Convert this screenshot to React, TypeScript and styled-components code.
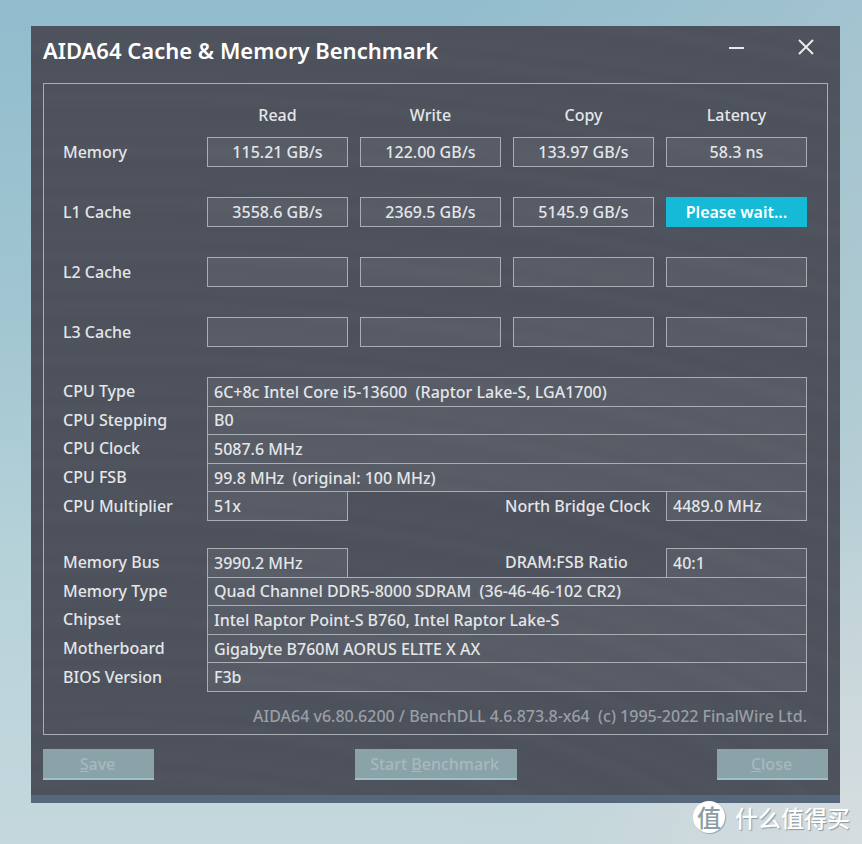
import React from "react";
import styled, { createGlobalStyle, css } from "styled-components";

const line = "#a9adb4";
const columns = "132px repeat(4, minmax(0, 1fr))";

const GlobalStyle = createGlobalStyle`
  * { box-sizing: border-box; }
  body {
    margin: 0;
    font-family: "Noto Sans", "Open Sans", "Noto Sans CJK SC", sans-serif;
    font-size: 16px;
    font-weight: 500;
    line-height: 22px;
    color: #e4e6e8;
  }
`;

const Desktop = styled.main`
  position: relative;
  min-height: 100vh;
  padding: 26px 22px 41px 31px;
  background:
    radial-gradient(circle at 100% 100%, #d6dde0 0, rgba(214, 221, 224, 0) 28%),
    linear-gradient(90deg, rgba(255, 255, 255, 0) 50%, rgba(190, 205, 210, 0.4) 100%),
    linear-gradient(180deg, #90bccd 0%, #a2c6d1 38%, #b6d2d9 66%, #c4d8dd 100%);
`;

const Window = styled.section`
  border-bottom: 8px solid #57677b;
  padding: 0 12px 15px;
  background:
    repeating-radial-gradient(
      ellipse 1300px 700px at 10% 140%,
      rgba(255, 255, 255, 0) 0,
      rgba(255, 255, 255, 0.018) 26px,
      rgba(255, 255, 255, 0) 40px,
      rgba(255, 255, 255, 0.012) 58px,
      rgba(255, 255, 255, 0) 97px
    ),
    #4c515c;
`;

const TitleBar = styled.header`
  display: flex;
  justify-content: space-between;
  align-items: flex-start;
  height: 57px;
`;

const Title = styled.h1`
  margin: 0;
  font-size: 22px;
  line-height: 48px;
  font-weight: 600;
  white-space: nowrap;
  color: #fff;
`;

const WindowControls = styled.div`
  display: flex;
  gap: 36px;
  padding: 4px 6px 0 0;
`;

const ControlButton = styled.button`
  display: grid;
  place-items: center;
  width: 33px;
  height: 33px;
  padding: 0;
  border: 0;
  background: none;
  color: #e8eaec;
`;

const Panel = styled.div`
  border: 1px solid ${line};
  padding: 20px 20px 7px 19px;
`;

const Results = styled.table`
  display: block;
  margin-bottom: 30px;
`;

const ResultsHead = styled.thead`
  display: block;
  margin-bottom: 11px;
`;

const ResultsBody = styled.tbody`
  display: grid;
  gap: 30px;
`;

const ResultRow = styled.tr`
  display: grid;
  grid-template-columns: ${columns};
  column-gap: 12px;
`;

const Heading = styled.th`
  padding: 0;
  font-weight: 500;
  text-align: center;
`;

const RowHeading = styled.th`
  padding: 0;
  font-weight: 500;
  line-height: 30px;
  text-align: left;
`;

const Cell = styled.td<{ $busy?: boolean }>`
  height: 30px;
  padding: 0;
  border: 1px solid ${line};
  background: rgba(255, 255, 255, 0.06);
  line-height: 28px;
  text-align: center;
  white-space: nowrap;
  ${(p) =>
    p.$busy &&
    css`
      border-color: #14bad6;
      background: #14bad6;
      color: #fff;
      font-weight: 600;
    `}
`;

const Details = styled.div`
  display: grid;
  grid-auto-rows: 1fr;
  height: 143px;
  margin-bottom: 28px;

  &:last-of-type {
    margin-bottom: 14px;
  }
`;

const DetailRow = styled.div`
  display: grid;
  grid-template-columns: ${columns};
  column-gap: 12px;
  min-height: 0;
  align-items: stretch;
`;

const Label = styled.label`
  align-self: center;
  white-space: nowrap;
`;

const SideLabel = styled(Label)`
  grid-column: 3 / 5;
  justify-self: end;
  width: 149px;
`;

const Field = styled.input<{ $short?: boolean }>`
  grid-column: ${(p) => (p.$short ? "auto" : "2 / -1")};
  width: 100%;
  min-width: 0;
  margin: 0 0 -1px;
  padding: 0 6px;
  border: 1px solid ${line};
  border-radius: 0;
  outline: 0;
  background: rgba(255, 255, 255, 0.06);
  color: inherit;
  font: inherit;
`;

const Version = styled.p`
  margin: 0;
  text-align: right;
  white-space: pre;
  color: #9a9ea5;
`;

const Actions = styled.footer`
  display: flex;
  justify-content: space-between;
  margin-top: 14px;
`;

const ActionButton = styled.button<{ $wide?: boolean }>`
  width: ${(p) => (p.$wide ? 162 : 111)}px;
  height: 31px;
  padding: 0 2px 0 0;
  border: 0;
  border-bottom: 2px solid #a0c0c7;
  background: #8aa3a9;
  color: #a9b8bd;
  font: inherit;
`;

const Watermark = styled.div`
  position: absolute;
  right: 12px;
  bottom: 11px;
  display: flex;
  align-items: center;
  gap: 10px;
  color: #fff;
  font-family: "Noto Sans CJK SC", sans-serif;
  font-size: 23px;
  font-weight: 500;
  line-height: 32px;
  text-shadow: 1px 1px 1px #8b9ba1;
`;

const Badge = styled.span`
  display: grid;
  place-items: center;
  width: 32px;
  height: 32px;
  border-radius: 50%;
  background: #fff;
  box-shadow: 1px 1px 1px #9aaab0;
  color: #8d9da3;
  font-size: 24px;
  font-style: oblique 8deg;
  line-height: 30px;
  text-shadow: none;
`;

const results: [string, string[]][] = [
  ["Memory", ["115.21 GB/s", "122.00 GB/s", "133.97 GB/s", "58.3 ns"]],
  ["L1 Cache", ["3558.6 GB/s", "2369.5 GB/s", "5145.9 GB/s", "Please wait..."]],
  ["L2 Cache", ["", "", "", ""]],
  ["L3 Cache", ["", "", "", ""]],
];

type Detail = { label: string; value: string; side?: [string, string] };

const cpu: Detail[] = [
  { label: "CPU Type", value: "6C+8c Intel Core i5-13600  (Raptor Lake-S, LGA1700)" },
  { label: "CPU Stepping", value: "B0" },
  { label: "CPU Clock", value: "5087.6 MHz" },
  { label: "CPU FSB", value: "99.8 MHz  (original: 100 MHz)" },
  { label: "CPU Multiplier", value: "51x", side: ["North Bridge Clock", "4489.0 MHz"] },
];

const board: Detail[] = [
  { label: "Memory Bus", value: "3990.2 MHz", side: ["DRAM:FSB Ratio", "40:1"] },
  { label: "Memory Type", value: "Quad Channel DDR5-8000 SDRAM  (36-46-46-102 CR2)" },
  { label: "Chipset", value: "Intel Raptor Point-S B760, Intel Raptor Lake-S" },
  { label: "Motherboard", value: "Gigabyte B760M AORUS ELITE X AX" },
  { label: "BIOS Version", value: "F3b" },
];

const toId = (text: string) => text.toLowerCase().replace(/[^a-z]+/g, "-");

function DetailList({ items }: { items: Detail[] }) {
  return (
    <Details>
      {items.map(({ label, value, side }) => (
        <DetailRow key={label}>
          <Label htmlFor={toId(label)}>{label}</Label>
          <Field id={toId(label)} value={value} readOnly $short={!!side} />
          {side && (
            <>
              <SideLabel htmlFor={toId(side[0])}>{side[0]}</SideLabel>
              <Field id={toId(side[0])} value={side[1]} readOnly $short />
            </>
          )}
        </DetailRow>
      ))}
    </Details>
  );
}

export default function App() {
  return (
    <Desktop>
      <GlobalStyle />
      <Window>
        <TitleBar>
          <Title>AIDA64 Cache &amp; Memory Benchmark</Title>
          <WindowControls>
            <ControlButton aria-label="Minimize">
              <svg width="16" height="16" viewBox="0 0 16 16" stroke="currentColor" strokeWidth="2">
                <path d="M0 9H15" />
              </svg>
            </ControlButton>
            <ControlButton aria-label="Close window">
              <svg width="16" height="16" viewBox="0 0 16 16" stroke="currentColor" strokeWidth="2">
                <path d="M1 1L15 15M15 1L1 15" />
              </svg>
            </ControlButton>
          </WindowControls>
        </TitleBar>
        <Panel>
          <Results>
            <ResultsHead>
              <ResultRow>
                <td />
                {["Read", "Write", "Copy", "Latency"].map((name) => (
                  <Heading key={name} scope="col">{name}</Heading>
                ))}
              </ResultRow>
            </ResultsHead>
            <ResultsBody>
              {results.map(([name, values]) => (
                <ResultRow key={name}>
                  <RowHeading scope="row">{name}</RowHeading>
                  {values.map((value, i) => (
                    <Cell key={i} $busy={value.startsWith("Please")}>{value}</Cell>
                  ))}
                </ResultRow>
              ))}
            </ResultsBody>
          </Results>
          <DetailList items={cpu} />
          <DetailList items={board} />
          <Version>AIDA64 v6.80.6200 / BenchDLL 4.6.873.8-x64  (c) 1995-2022 FinalWire Ltd.</Version>
        </Panel>
        <Actions>
          <ActionButton disabled><u>S</u>ave</ActionButton>
          <ActionButton disabled $wide>Start <u>B</u>enchmark</ActionButton>
          <ActionButton disabled><u>C</u>lose</ActionButton>
        </Actions>
      </Window>
      <Watermark>
        <Badge>值</Badge>
        <span>什么值得买</span>
      </Watermark>
    </Desktop>
  );
}
